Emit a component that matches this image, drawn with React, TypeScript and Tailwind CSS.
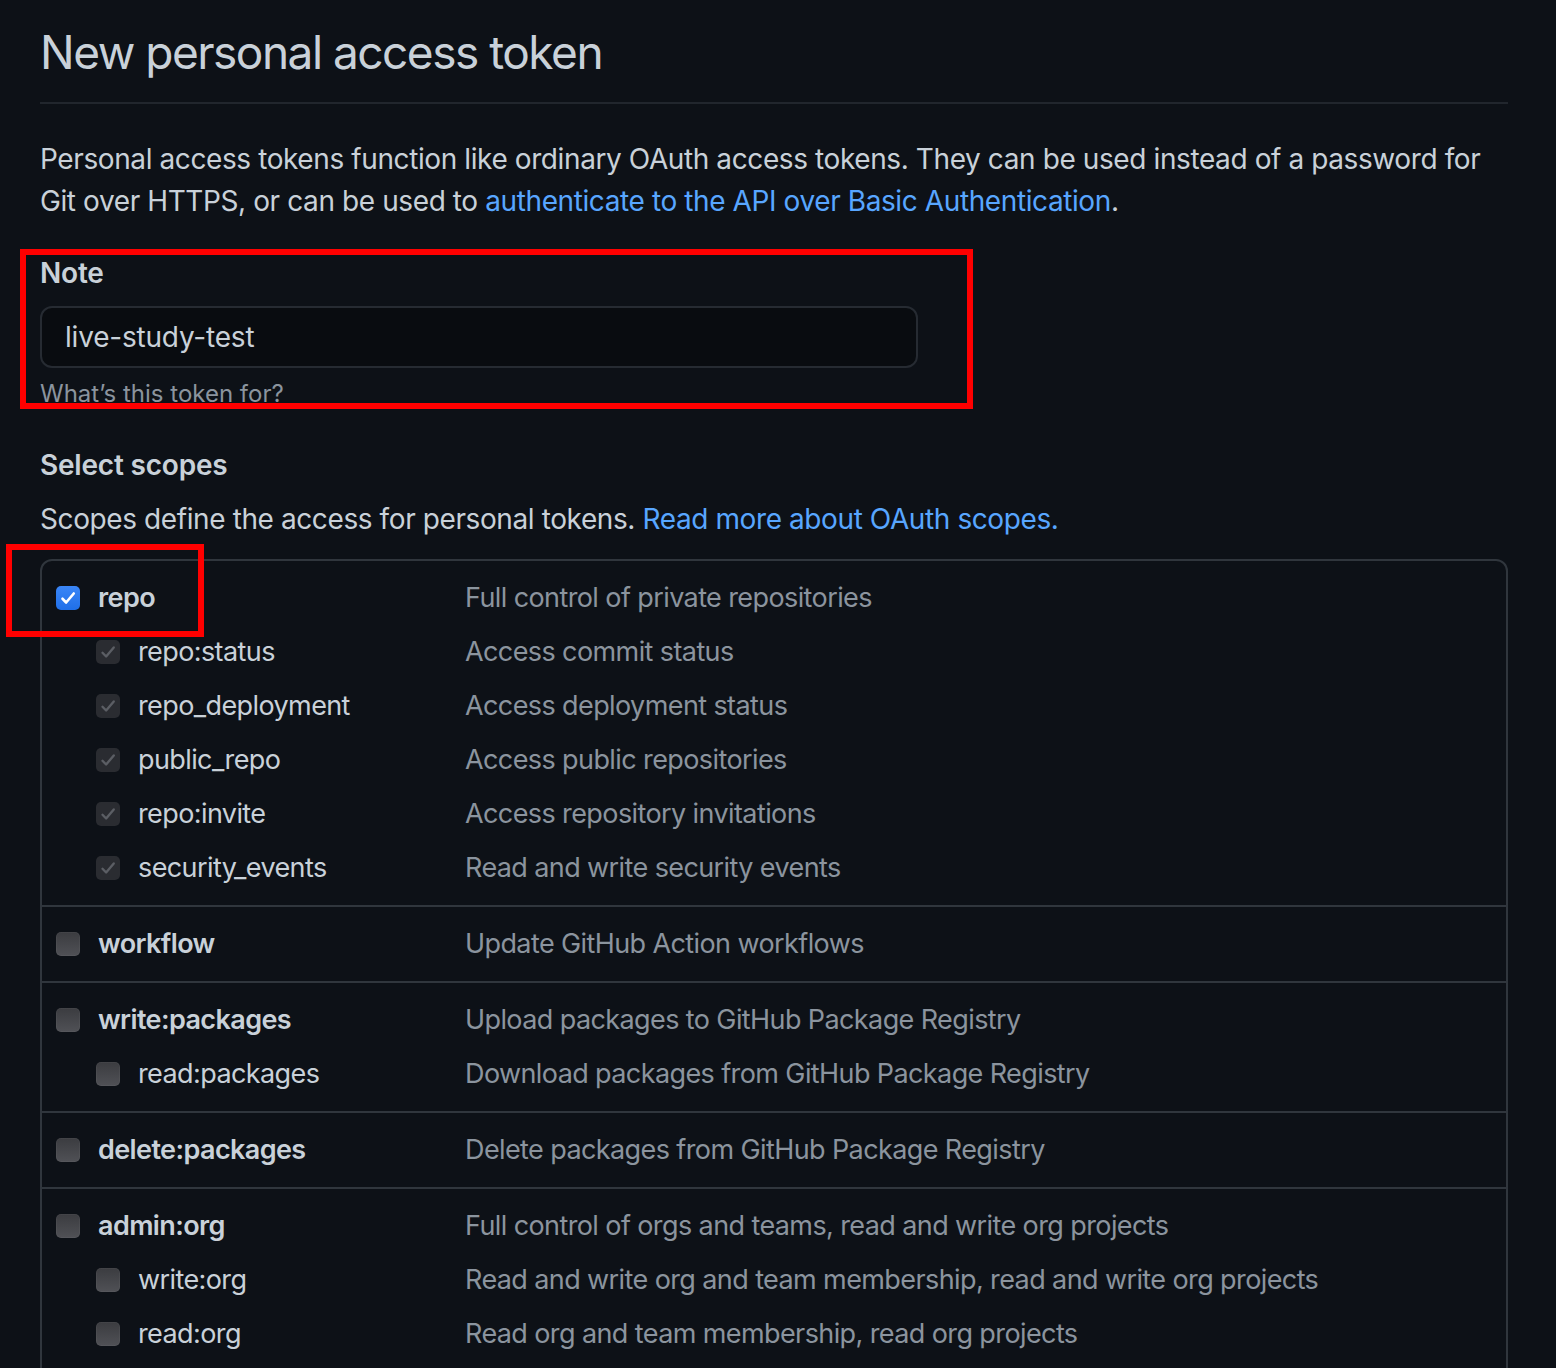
import React from "react";

type Scope = { name: string; desc: string; children?: { name: string; desc: string }[] };

const scopes: Scope[] = [
  {
    name: "repo",
    desc: "Full control of private repositories",
    children: [
      { name: "repo:status", desc: "Access commit status" },
      { name: "repo_deployment", desc: "Access deployment status" },
      { name: "public_repo", desc: "Access public repositories" },
      { name: "repo:invite", desc: "Access repository invitations" },
      { name: "security_events", desc: "Read and write security events" },
    ],
  },
  { name: "workflow", desc: "Update GitHub Action workflows" },
  {
    name: "write:packages",
    desc: "Upload packages to GitHub Package Registry",
    children: [{ name: "read:packages", desc: "Download packages from GitHub Package Registry" }],
  },
  { name: "delete:packages", desc: "Delete packages from GitHub Package Registry" },
  {
    name: "admin:org",
    desc: "Full control of orgs and teams, read and write org projects",
    children: [
      { name: "write:org", desc: "Read and write org and team membership, read and write org projects" },
      { name: "read:org", desc: "Read org and team membership, read org projects" },
    ],
  },
  {
    name: "admin:public_key",
    desc: "Full control of user public keys",
    children: [
      { name: "write:public_key", desc: "Write user public keys" },
      { name: "read:public_key", desc: "Read user public keys" },
    ],
  },
];

function Checkbox({ state }: { state: "checked" | "disabled" | "off" }) {
  if (state === "checked") {
    return (
      <span className="w-6 h-6 rounded-[5px] bg-gradient-to-b from-[#3a86f7] to-[#1f6fe8] flex items-center justify-center shrink-0">
        <svg width="20" height="20" viewBox="0 0 16 16" fill="none">
          <path d="M3.6 8.6l2.9 3L12.6 4.4" stroke="#fff" strokeWidth="2.1" strokeLinecap="round" strokeLinejoin="round" />
        </svg>
      </span>
    );
  }
  if (state === "disabled") {
    return (
      <span className="w-6 h-6 rounded-[5px] bg-[#2a2c31] flex items-center justify-center shrink-0">
        <svg width="20" height="20" viewBox="0 0 16 16" fill="none">
          <path d="M3.6 8.6l2.9 3L12.6 4.4" stroke="#5b5e64" strokeWidth="1.9" strokeLinecap="round" strokeLinejoin="round" />
        </svg>
      </span>
    );
  }
  return <span className="w-6 h-6 rounded-[5px] bg-gradient-to-b from-[#3b3c40] to-[#505156] shadow-[inset_0_0_0_1px_rgba(255,255,255,0.04)] shrink-0" />;
}

export default function App() {
  return (
    <div
      className="relative min-h-[1368px] bg-[#0d1117] text-[#c9d1d9] px-[40px] pb-10 text-[27px] tracking-[-0.6px]"
      style={{ fontFamily: "Inter, 'Noto Sans', sans-serif" }}
    >
      <div className="w-[1468px]">
        {/* Header */}
        <h1 className="pt-[22px] pb-[20px] text-[46px] leading-[60px] font-normal tracking-[-1.5px] border-b-2 border-[#21262d]">
          New personal access token
        </h1>

        <p className="mt-[34px] text-[28px] leading-[42px] tracking-[-0.4px]">
          Personal access tokens function like ordinary OAuth access tokens. They can be used instead of a password for
          <br />
          Git over HTTPS, or can be used to{" "}
          <a className="text-[#58a6ff]">authenticate to the API over Basic Authentication</a>.
        </p>

        {/* Note */}
        <div className="mt-[30px]">
          <div className="text-[28px] leading-[42px] tracking-[-0.2px] font-semibold">Note</div>
          <div className="mt-[12px] w-[878px] h-[62px] rounded-[12px] bg-[#090c10] border-2 border-[#262b32] flex items-center px-[23px] text-[28px] tracking-[-0.2px]">
            live-study-test
          </div>
          <div className="mt-[8px] text-[24px] leading-[36px] tracking-[0px] text-[#8b949e]">What’s this token for?</div>
        </div>

        {/* Scopes */}
        <div className="mt-[32px] text-[28px] leading-[42px] tracking-[-0.2px] font-semibold">Select scopes</div>
        <p className="mt-[12px] text-[28px] leading-[42px] tracking-[-0.4px]">
          Scopes define the access for personal tokens.{" "}
          <a className="text-[#58a6ff]">Read more about OAuth scopes.</a>
        </p>

        <div className="mt-[19px] border-2 border-[#30363d] rounded-[12px]">
          {scopes.map((s, i) => (
            <div key={s.name} className={`py-[10px] ${i > 0 ? "border-t-2 border-[#30363d]" : ""}`}>
              <div className="h-[54px] flex items-center">
                <div className="w-[423px] pl-[14px] flex items-center gap-[18px]">
                  <Checkbox state={s.name === "repo" ? "checked" : "off"} />
                  <span className="font-semibold">{s.name}</span>
                </div>
                <span className="text-[#8b949e]">{s.desc}</span>
              </div>
              {s.children?.map((c) => (
                <div key={c.name} className="h-[54px] flex items-center">
                  <div className="w-[423px] pl-[54px] flex items-center gap-[18px]">
                    <Checkbox state={s.name === "repo" ? "disabled" : "off"} />
                    <span>{c.name}</span>
                  </div>
                  <span className="text-[#8b949e]">{c.desc}</span>
                </div>
              ))}
            </div>
          ))}
        </div>
      </div>

      {/* annotation overlays */}
      <div className="absolute left-[20px] top-[249px] w-[953px] h-[160px] border-[6px] border-[#ff0000]" />
      <div className="absolute left-[6px] top-[544px] w-[198px] h-[93px] border-[6px] border-[#ff0000]" />
    </div>
  );
}
